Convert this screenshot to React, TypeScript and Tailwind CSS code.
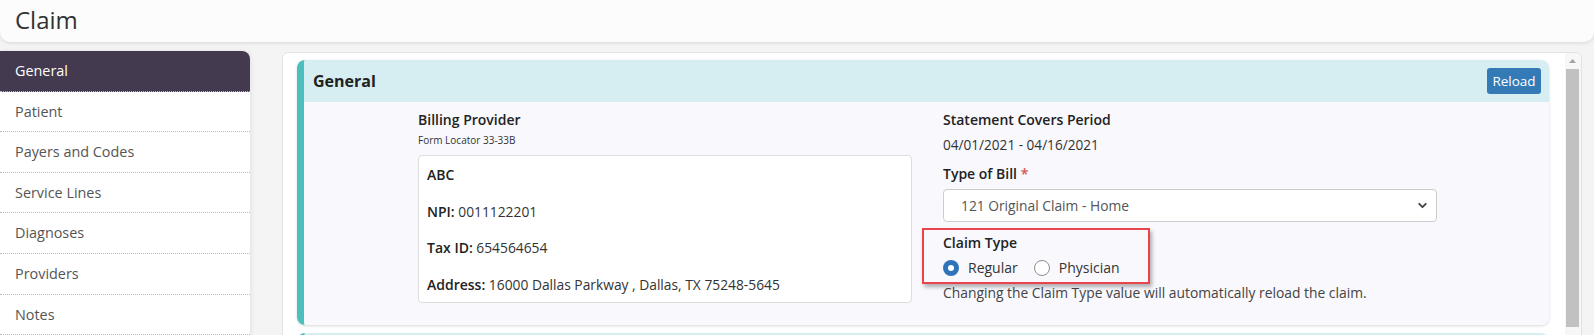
import { ChevronDown } from "lucide-react";

const navItems = [
  "General",
  "Patient",
  "Payers and Codes",
  "Service Lines",
  "Diagnoses",
  "Providers",
  "Notes",
];

function Radio({ checked, label }: { checked?: boolean; label: string }) {
  return (
    <label className="flex items-center gap-[9px]">
      {checked ? (
        <span className="w-4 h-4 rounded-full bg-[#2f73b9] flex items-center justify-center">
          <span className="w-[6px] h-[6px] rounded-full bg-white" />
        </span>
      ) : (
        <span className="w-4 h-4 rounded-full border border-[#8d8d8d] bg-white" />
      )}
      <span className="text-[14px] text-[#333]">{label}</span>
    </label>
  );
}

export default function App() {
  const active = "General";

  return (
    <div className="w-full h-[335px] overflow-hidden bg-[#f4f4f4] font-['Open_Sans',sans-serif] text-[#333]">
      {/* header */}
      <div className="h-[42px] bg-[#fcfcfc] rounded-b-[10px] shadow-[0_1px_4px_rgba(0,0,0,0.12)] pl-[15px] flex items-center">
        <h1 className="text-[24px] leading-none text-[#333] mt-[-2px]">Claim</h1>
      </div>

      <div className="flex mt-[9px]">
        {/* sidebar */}
        <nav className="w-[250px] shrink-0 bg-white rounded-tr-[8px] overflow-hidden shadow-[1px_0_4px_rgba(0,0,0,0.08)] h-[300px]">
          {navItems.map((item) => (
            <div
              key={item}
              className={
                item === active
                  ? "h-[40.6px] pl-[15px] flex items-center border-b border-dotted border-[#bbb] bg-[#433a4f] text-white text-[14.4px]"
                  : "h-[40.6px] pl-[15px] flex items-center border-b border-dotted border-[#bbb] text-[#555] text-[14.4px]"
              }
            >
              {item}
            </div>
          ))}
        </nav>

        {/* scrolling panel */}
        <div className="ml-[32px] mr-[12px] mt-[1px] flex-1 flex bg-white border border-[#e2e2e2] rounded-[6px] h-[300px] overflow-hidden">
          <div className="flex-1 pl-[14px] pr-[16px] pt-[7px]">
            <section className="rounded-[8px] border-l-[7px] border-[#4bbfbb] overflow-hidden shadow-[0_1px_3px_rgba(0,0,0,0.16)]">
              <div className="h-[42px] bg-[#d6eef1] flex items-center justify-between pl-[9px] pr-[8px]">
                <h2 className="text-[16px] font-bold text-[#222]">General</h2>
                <button className="w-[54px] h-[26px] rounded-[3px] bg-[#337ab7] text-white text-[13.5px]">
                  Reload
                </button>
              </div>

              <div className="h-[223px] bg-[#f8f8fd] pt-[8px] pl-[114px] flex gap-[31px]">
                {/* billing provider */}
                <div className="w-[494px]">
                  <h3 className="text-[14px] leading-[20px] font-semibold text-[#222]">Billing Provider</h3>
                  <p className="text-[10px] leading-[20px] text-[#333]">Form Locator 33-33B</p>
                  <div className="mt-[5px] bg-white border border-[#ddd] rounded-[4px] pl-[8px] pt-[9px] pb-[7px] flex flex-col gap-[16.5px] text-[13.8px] leading-[20px]">
                    <p className="font-semibold text-[14px] text-[#222]">ABC</p>
                    <p>
                      <span className="font-semibold text-[14px] text-[#222]">NPI:</span> 0011122201
                    </p>
                    <p>
                      <span className="font-semibold text-[14px] text-[#222]">Tax ID:</span> 654564654
                    </p>
                    <p>
                      <span className="font-semibold text-[14px] text-[#222]">Address:</span> 16000 Dallas Parkway , Dallas, TX 75248-5645
                    </p>
                  </div>
                </div>

                {/* statement / bill type */}
                <div className="w-[494px] text-[14px] leading-[20px]">
                  <h3 className="font-semibold text-[#222]">Statement Covers Period</h3>
                  <p className="mt-[5px] text-[13.6px]">04/01/2021 - 04/16/2021</p>
                  <h3 className="mt-[9px] font-semibold text-[#222]">
                    Type of Bill <span className="text-[#d9534f]">*</span>
                  </h3>
                  <div className="mt-[5px] h-[33px] bg-white border border-[#ccc] rounded-[4px] pl-[17px] pr-[7px] flex items-center justify-between text-[#555] text-[13.8px]">
                    <span>121 Original Claim - Home</span>
                    <ChevronDown className="w-[13px] h-[13px] text-[#444]" strokeWidth={3.5} />
                  </div>

                  <div className="relative mt-[11px]">
                    <h3 className="font-semibold text-[#222]">Claim Type</h3>
                    <div className="mt-[5px] flex items-center gap-[16px]">
                      <Radio checked label="Regular" />
                      <Radio label="Physician" />
                    </div>
                    <div className="absolute left-[-21px] top-[-5px] w-[228px] h-[56px] border-2 border-[#e8444a] shadow-[2px_3px_4px_rgba(0,0,0,0.3)]" />
                  </div>
                  <p className="mt-[5px] text-[#444] text-[13.85px]">
                    Changing the Claim Type value will automatically reload the claim.
                  </p>
                </div>
              </div>
            </section>

            <section className="mt-[8px] rounded-t-[8px] border-l-[7px] border-[#4bbfbb] h-[40px] bg-[#d6eef1]" />
          </div>

          {/* scrollbar */}
          <div className="w-[16px] shrink-0 bg-[#f7f7f7] flex flex-col items-start pl-[1px]">
            <div className="h-[16px] w-[13px] flex items-center justify-center">
              <svg width="7" height="4" viewBox="0 0 7 4">
                <path d="M0 4 L3.5 0 L7 4 Z" fill="#a3a3a3" />
              </svg>
            </div>
            <div className="w-[13px] h-[258px] bg-[#c1c1c1]" />
          </div>
        </div>
      </div>
    </div>
  );
}
